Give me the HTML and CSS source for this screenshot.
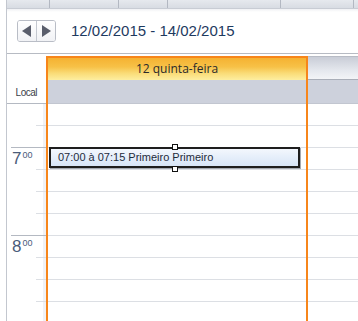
FILE: index.html
```html
<!DOCTYPE html>
<html>
<head>
    <meta charset="UTF-8">
    <meta name="viewport" content="width=device-width, initial-scale=1.0">
    <title>Calendário</title>
    <link rel="stylesheet" href="styles.css">
</head>
<body>
    <div class="frame">
        <div class="tabs">
            <span class="tab tab-1"></span>
            <span class="tab tab-2"></span>
            <span class="tab tab-3"></span>
            <span class="tab tab-4"></span>
            <span class="tab tab-5"></span>
        </div>

        <div class="toolbar">
            <div class="nav">
                <span class="nav-btn">
                    <svg width="18" height="20" viewBox="0 0 18 20"><polygon points="13,4 13,16 4,10" fill="#5a5e6c"/></svg>
                </span>
                <span class="nav-btn">
                    <svg width="18" height="20" viewBox="0 0 18 20"><polygon points="5,4 5,16 14,10" fill="#5a5e6c"/></svg>
                </span>
            </div>
            <span class="range">12/02/2015 - 14/02/2015</span>
        </div>

        <div class="calendar">
            <div class="gutter">
                <div class="gutter-head"><span>Local</span></div>
                <div class="gutter-lead">
                    <div class="q"></div>
                </div>
                <div class="hour">
                    <span class="hour-label">7<sup>00</sup></span>
                    <div class="quarters">
                        <div class="q"></div>
                        <div class="q"></div>
                        <div class="q"></div>
                    </div>
                </div>
                <div class="hour">
                    <span class="hour-label">8<sup>00</sup></span>
                    <div class="quarters">
                        <div class="q"></div>
                        <div class="q"></div>
                        <div class="q"></div>
                    </div>
                </div>
            </div>

            <div class="day">
                <div class="day-head">12 quinta-feira</div>
                <div class="allday"></div>
                <div class="slots">
                    <div class="slot"></div>
                    <div class="slot"></div>
                    <div class="slot"></div>
                    <div class="slot"></div>
                    <div class="slot"></div>
                    <div class="slot"></div>
                    <div class="slot"></div>
                    <div class="slot"></div>
                    <div class="slot"></div>
                    <div class="slot"></div>

                    <div class="event">
                        <span class="handle handle-top"></span>
                        07:00 à 07:15 Primeiro Primeiro
                        <span class="handle handle-bottom"></span>
                    </div>
                </div>
            </div>

            <div class="day-next">
                <div class="next-head"></div>
                <div class="allday"></div>
                <div class="slots">
                    <div class="slot"></div>
                    <div class="slot"></div>
                    <div class="slot"></div>
                    <div class="slot"></div>
                    <div class="slot"></div>
                    <div class="slot"></div>
                    <div class="slot"></div>
                    <div class="slot"></div>
                    <div class="slot"></div>
                    <div class="slot"></div>
                </div>
            </div>
        </div>
    </div>
</body>
</html>
```

FILE: styles.css
```css
* {
    box-sizing: border-box;
}

body {
    margin: 0;
    padding: 0;
    background-color: #fff;
    font-family: 'Liberation Sans', Arial, sans-serif;
    overflow: hidden;
}

.frame {
    margin-left: 6px;
    height: 321px;
    border-left: 1px solid #c3c7cf;
    display: flex;
    flex-direction: column;
}

/* top tab strip */
.tabs {
    height: 9px;
    display: flex;
    background: linear-gradient(#e6e9ee, #d8dce3);
    border-bottom: 1px solid #c8ccd4;
}

.tab {
    height: 100%;
    border-right: 1px solid #b3b8c2;
}

.tab-1 { width: 43px; }
.tab-2 { width: 69px; }
.tab-3 { width: 49px; }
.tab-4 { width: 113px; }
.tab-5 { width: 73px; }

/* toolbar */
.toolbar {
    height: 45px;
    display: flex;
    align-items: flex-start;
    padding: 11px 0 0 10px;
    border-bottom: 1px solid #b7bbc3;
    background: linear-gradient(#f0f1f4, #fff 3px);
}

.nav {
    display: flex;
    height: 22px;
    border: 1px solid #b9bdc6;
    border-radius: 3px;
    overflow: hidden;
}

.nav-btn {
    width: 18px;
    height: 20px;
    display: block;
    background: linear-gradient(#ffffff, #f1f2f5);
}

.nav-btn:first-child {
    width: 19px;
    border-right: 1px solid #c4c8d0;
}

.nav-btn svg {
    display: block;
}

.range {
    margin-left: 15px;
    font-size: 15px;
    line-height: 22px;
    color: #1e3a5f;
}

/* calendar body */
.calendar {
    flex: 1;
    margin-top: 2px;
    display: grid;
    grid-template-columns: 39px 262px 1fr;
    overflow: hidden;
}

.gutter-head {
    height: 48px;
    display: flex;
    align-items: flex-end;
    justify-content: flex-end;
    padding: 0 9px 5px 0;
    border-bottom: 1px solid #b4b9c2;
    font-size: 10px;
    line-height: 10px;
    letter-spacing: -0.5px;
    color: #3a3f4a;
}

.gutter-lead {
    height: 43px;
    box-shadow: inset -3px 0 0 #f1f2f5;
}

.q {
    height: 22px;
    margin-left: 29px;
    border-bottom: 1px solid #dcdfe4;
}

.hour {
    height: 88px;
    margin-left: 4px;
    display: flex;
    border-top: 1px solid #b4b9c2;
    box-shadow: inset -3px 0 0 #f1f2f5;
}

.hour-label {
    width: 25px;
    padding: 3px 0 0 1px;
    font-size: 17px;
    line-height: 16px;
    color: #4a5c7a;
}

.hour-label sup {
    font-size: 9px;
    line-height: 9px;
    vertical-align: top;
    margin-left: 1px;
}

.quarters {
    flex: 1;
}

.quarters .q {
    margin-left: 0;
}

/* day column */
.day {
    border: 2px solid #f7861b;
    border-bottom: none;
    display: flex;
    flex-direction: column;
}

.day-head {
    height: 22px;
    text-align: center;
    font-family: 'Open Sans', sans-serif;
    font-size: 12px;
    line-height: 22px;
    color: #2a2a2a;
    background: linear-gradient(#f5b232 0%, #f7c147 40%, #fadc78 70%, #fdeea0 100%);
}

.allday {
    height: 24px;
    background-color: #cdd1dc;
    border-bottom: 1px solid #c2c6d0;
}

.slots {
    position: relative;
    flex: 1;
}

.slot {
    height: 22px;
    border-bottom: 1px solid #dcdfe4;
}

.day-next {
    display: flex;
    flex-direction: column;
}

.next-head {
    height: 24px;
    border-top: 1px solid #b8bcc5;
    border-bottom: 1px solid #a9aeb8;
    background: linear-gradient(#c9cdd7, #e4e7ed 60%, #f3f4f7);
}

/* appointment */
.event {
    position: absolute;
    top: 43px;
    left: 1px;
    right: 6px;
    height: 21px;
    padding-left: 7px;
    border: 2px solid #1e1e1e;
    box-shadow: 1px 1px 0 #a3a8b0;
    background: linear-gradient(#f3f7fd, #d7e5f7);
    font-size: 11px;
    line-height: 17px;
    color: #1e2b3b;
    white-space: nowrap;
}

.handle {
    position: absolute;
    left: 50%;
    width: 6px;
    height: 6px;
    margin-left: -3px;
    background-color: #fff;
    border: 1px solid #111;
}

.handle-top {
    top: -5px;
}

.handle-bottom {
    bottom: -6px;
}
```
